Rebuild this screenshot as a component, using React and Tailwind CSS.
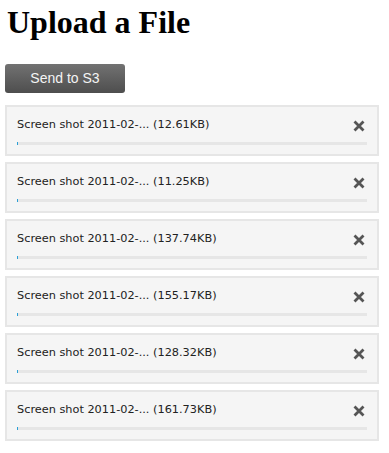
import React from "react";

const files = ["12.61KB", "11.25KB", "137.74KB", "155.17KB", "128.32KB", "161.73KB"];

function XIcon() {
  return (
    <svg width="12" height="12" viewBox="0 0 12 12" aria-hidden="true">
      <path d="M1.5 1.5 L10.5 10.5 M10.5 1.5 L1.5 10.5" stroke="#555555" strokeWidth="2.8" strokeLinecap="butt" />
    </svg>
  );
}

export default function App() {
  return (
    <div className="bg-white min-h-[453px] px-[5px] pt-[4px]">
      <h1 className="font-['Liberation_Serif',serif] font-bold text-[32px] leading-[37px] text-black pl-[2px]">
        Upload a File
      </h1>
      <button className="mt-[23px] w-[120px] h-[29px] rounded-[3px] bg-gradient-to-b from-[#727272] to-[#4e4e4e] text-[#f4f4f4] text-[14px] font-['Liberation_Sans',sans-serif] flex items-center justify-center">
        Send to S3
      </button>
      <div className="mt-[12px] flex flex-col gap-[6px] w-[374px]">
        {files.map((s) => (
          <div key={s} className="border-2 border-[#e6e6e6] bg-[#f5f5f5] h-[51px] px-[10px] pt-[10px]">
            <div className="flex items-center justify-between h-[17px]">
              <span className="font-['DejaVu_Sans',sans-serif] text-[11.3px] text-[#222]">
                Screen shot 2011-02-... ({s})
              </span>
              <span className="mr-[2px] flex items-center"><XIcon /></span>
            </div>
            <div className="mt-[8px] h-[3px] bg-[#e6e6e6] flex">
              <div className="w-[1px] h-full bg-[#2a9fd6]" />
            </div>
          </div>
        ))}
      </div>
    </div>
  );
}
